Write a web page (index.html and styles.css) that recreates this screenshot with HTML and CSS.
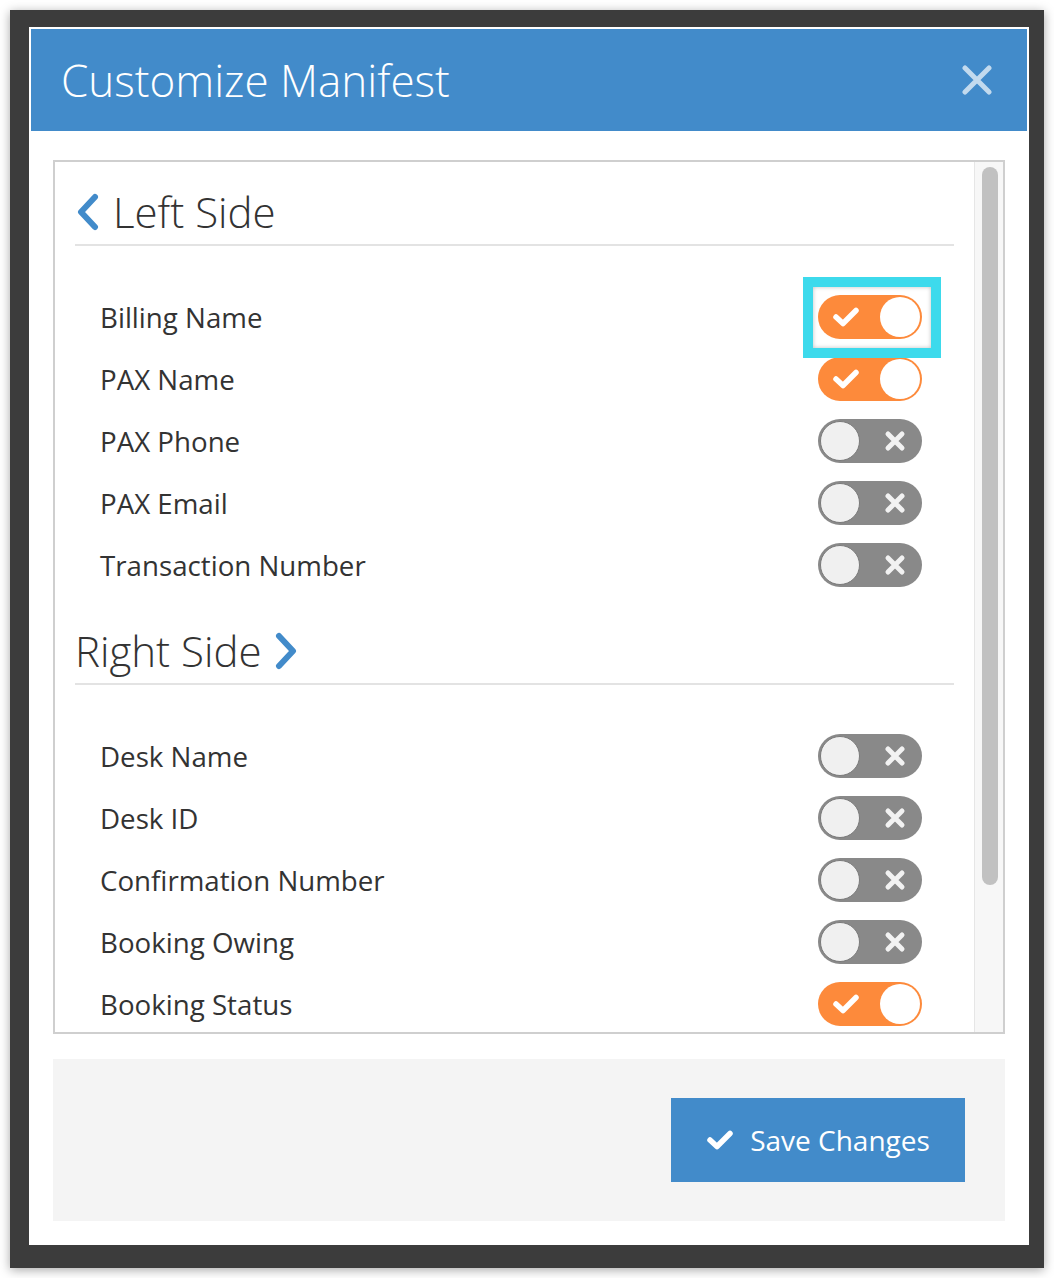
FILE: index.html
```html
<!doctype html>
<html lang="en">
  <head>
    <meta charset="UTF-8" />
    <title>Customize Manifest</title>
    <link rel="stylesheet" href="styles.css">
  </head>
  <body>
    <div class="backdrop">
      <div class="modal">
        <div class="modal-header">
          <h1 class="modal-title">Customize Manifest</h1>
          <button type="button" class="close-btn" aria-label="Close">
            <svg width="30" height="30" viewBox="0 0 30 30"><path d="M3 3 L27 27 M27 3 L3 27" /></svg>
          </button>
        </div>

        <div class="modal-body">
          <div class="panel">
            <div class="panel-content">
              <!-- Left side columns -->
              <div class="section">
                <h2 class="section-title">
                  <svg class="chevron" width="24" height="38" viewBox="0 0 24 38"><path d="M19 4 L5 19 L19 34" /></svg>
                  Left Side
                </h2>
                <div class="field-list">
                  <div class="field-row">
                    <span class="field-label">Billing Name</span>
                    <span class="toggle-wrap highlighted">
                      <span class="toggle on"><svg class="mark" width="28" height="22" viewBox="0 0 28 22"><path d="M4 11 L11 17.5 L24 4.5" /></svg><span class="knob"></span></span>
                    </span>
                  </div>
                  <div class="field-row">
                    <span class="field-label">PAX Name</span>
                    <span class="toggle on"><svg class="mark" width="28" height="22" viewBox="0 0 28 22"><path d="M4 11 L11 17.5 L24 4.5" /></svg><span class="knob"></span></span>
                  </div>
                  <div class="field-row">
                    <span class="field-label">PAX Phone</span>
                    <span class="toggle off"><span class="knob"></span><svg class="mark" width="24" height="24" viewBox="0 0 24 24"><path d="M5 5 L19 19 M19 5 L5 19" /></svg></span>
                  </div>
                  <div class="field-row">
                    <span class="field-label">PAX Email</span>
                    <span class="toggle off"><span class="knob"></span><svg class="mark" width="24" height="24" viewBox="0 0 24 24"><path d="M5 5 L19 19 M19 5 L5 19" /></svg></span>
                  </div>
                  <div class="field-row">
                    <span class="field-label">Transaction Number</span>
                    <span class="toggle off"><span class="knob"></span><svg class="mark" width="24" height="24" viewBox="0 0 24 24"><path d="M5 5 L19 19 M19 5 L5 19" /></svg></span>
                  </div>
                </div>
              </div>

              <!-- Right side columns -->
              <div class="section">
                <h2 class="section-title">
                  Right Side
                  <svg class="chevron right" width="24" height="38" viewBox="0 0 24 38"><path d="M5 4 L19 19 L5 34" /></svg>
                </h2>
                <div class="field-list">
                  <div class="field-row">
                    <span class="field-label">Desk Name</span>
                    <span class="toggle off"><span class="knob"></span><svg class="mark" width="24" height="24" viewBox="0 0 24 24"><path d="M5 5 L19 19 M19 5 L5 19" /></svg></span>
                  </div>
                  <div class="field-row">
                    <span class="field-label">Desk ID</span>
                    <span class="toggle off"><span class="knob"></span><svg class="mark" width="24" height="24" viewBox="0 0 24 24"><path d="M5 5 L19 19 M19 5 L5 19" /></svg></span>
                  </div>
                  <div class="field-row">
                    <span class="field-label">Confirmation Number</span>
                    <span class="toggle off"><span class="knob"></span><svg class="mark" width="24" height="24" viewBox="0 0 24 24"><path d="M5 5 L19 19 M19 5 L5 19" /></svg></span>
                  </div>
                  <div class="field-row">
                    <span class="field-label">Booking Owing</span>
                    <span class="toggle off"><span class="knob"></span><svg class="mark" width="24" height="24" viewBox="0 0 24 24"><path d="M5 5 L19 19 M19 5 L5 19" /></svg></span>
                  </div>
                  <div class="field-row">
                    <span class="field-label">Booking Status</span>
                    <span class="toggle on"><svg class="mark" width="28" height="22" viewBox="0 0 28 22"><path d="M4 11 L11 17.5 L24 4.5" /></svg><span class="knob"></span></span>
                  </div>
                </div>
              </div>
            </div>
            <div class="scroll-track"><div class="scroll-thumb"></div></div>
          </div>
        </div>

        <div class="modal-footer">
          <button type="button" class="save-btn">
            <svg width="28" height="22" viewBox="0 0 28 22"><path d="M4 11 L11 17.5 L24 4.5" /></svg>
            Save Changes
          </button>
        </div>
      </div>
    </div>
  </body>
</html>
```

FILE: styles.css
```css
body {
  margin: 0;
  background: #fff;
  font-family: "Open Sans", Arial, sans-serif;
}

.backdrop {
  margin: 10px;
  width: 1034px;
  height: 1258px;
  box-sizing: border-box;
  padding: 17px 15px 23px 19px;
  background: #3c3c3c;
  box-shadow: 0 2px 10px rgba(0, 0, 0, 0.35);
}

.modal {
  background: #fff;
  padding: 2px;
  height: 1218px;
  box-sizing: border-box;
  display: flex;
  flex-direction: column;
}

.modal-header {
  height: 102px;
  flex: none;
  background: #428bca;
  display: flex;
  align-items: center;
  justify-content: space-between;
  padding: 0 35px 0 30px;
}

.modal-title {
  margin: 0;
  color: #fff;
  font-size: 44px;
  font-weight: 300;
  line-height: 1;
}

.close-btn {
  background: none;
  border: none;
  padding: 0;
  width: 30px;
  height: 30px;
  cursor: pointer;
}

.close-btn path {
  stroke: rgba(255, 255, 255, 0.68);
  stroke-width: 5;
  stroke-linecap: round;
  fill: none;
}

.modal-body {
  padding: 29px 22px 0 22px;
}

.panel {
  height: 874px;
  box-sizing: border-box;
  border: 2px solid #cfcfcf;
  display: flex;
  overflow: hidden;
}

.panel-content {
  flex: 1;
  padding-top: 20px;
  overflow: hidden;
}

.section + .section {
  margin-top: 25px;
}

.section-title {
  margin: 0 20px;
  display: flex;
  align-items: center;
  gap: 13px;
  font-size: 42px;
  font-weight: 300;
  line-height: 60px;
  color: #333;
  padding-bottom: 2px;
  border-bottom: 2px solid #e3e3e3;
}

.chevron {
  flex: none;
  margin-left: 1px;
}

.chevron.right {
  margin-left: -1px;
}

.chevron path {
  stroke: #428bca;
  stroke-width: 6;
  stroke-linecap: round;
  stroke-linejoin: round;
  fill: none;
}

.field-list {
  padding-top: 40px;
}

.field-row {
  height: 62px;
  display: flex;
  align-items: center;
  justify-content: space-between;
  padding: 0 52px 0 45px;
}

.field-label {
  font-size: 27.7px;
  color: #333;
}

.toggle-wrap {
  position: relative;
  display: flex;
}

.toggle-wrap.highlighted::after {
  content: "";
  position: absolute;
  left: -15px;
  top: -18px;
  width: 118px;
  height: 61px;
  border: 10px solid #3ddaec;
  box-shadow: inset 0 0 4px rgba(0, 0, 0, 0.25);
}

.toggle {
  width: 104px;
  height: 44px;
  box-sizing: border-box;
  border-radius: 22px;
  padding: 2px;
  display: flex;
  align-items: center;
  justify-content: space-between;
}

.toggle .knob {
  width: 40px;
  height: 40px;
  border-radius: 50%;
  box-sizing: border-box;
}

.toggle.on {
  background: #fd8a3b;
  padding-left: 14px;
}

.toggle.on .knob {
  background: #fff;
}

.toggle.off {
  background: #898989;
  padding-right: 15px;
}

.toggle.off .knob {
  background: #f0f0f0;
  border: 1px solid #7a7a7a;
}

.mark path {
  stroke: #fff;
  stroke-width: 5.5;
  stroke-linecap: round;
  stroke-linejoin: round;
  fill: none;
}

.toggle.off .mark path {
  stroke: #f2f2f2;
  stroke-width: 5;
}

.scroll-track {
  width: 29px;
  flex: none;
  background: #f7f7f7;
  border-left: 1px solid #e6e6e6;
  padding: 5px 0 0 7px;
  box-sizing: border-box;
}

.scroll-thumb {
  width: 16px;
  height: 718px;
  border-radius: 8px;
  background: #c1c1c1;
}

.modal-footer {
  margin: 25px 22px 24px 22px;
  height: 162px;
  flex: none;
  background: #f4f4f4;
  display: flex;
  align-items: center;
  justify-content: flex-end;
  padding-right: 40px;
}

.save-btn {
  width: 294px;
  height: 84px;
  background: #428bca;
  border: none;
  color: #fff;
  font-family: "Open Sans", Arial, sans-serif;
  font-size: 28px;
  display: flex;
  align-items: center;
  justify-content: center;
  gap: 16px;
  cursor: pointer;
}

.save-btn path {
  stroke: #fff;
  stroke-width: 5.5;
  stroke-linecap: round;
  stroke-linejoin: round;
  fill: none;
}
```
